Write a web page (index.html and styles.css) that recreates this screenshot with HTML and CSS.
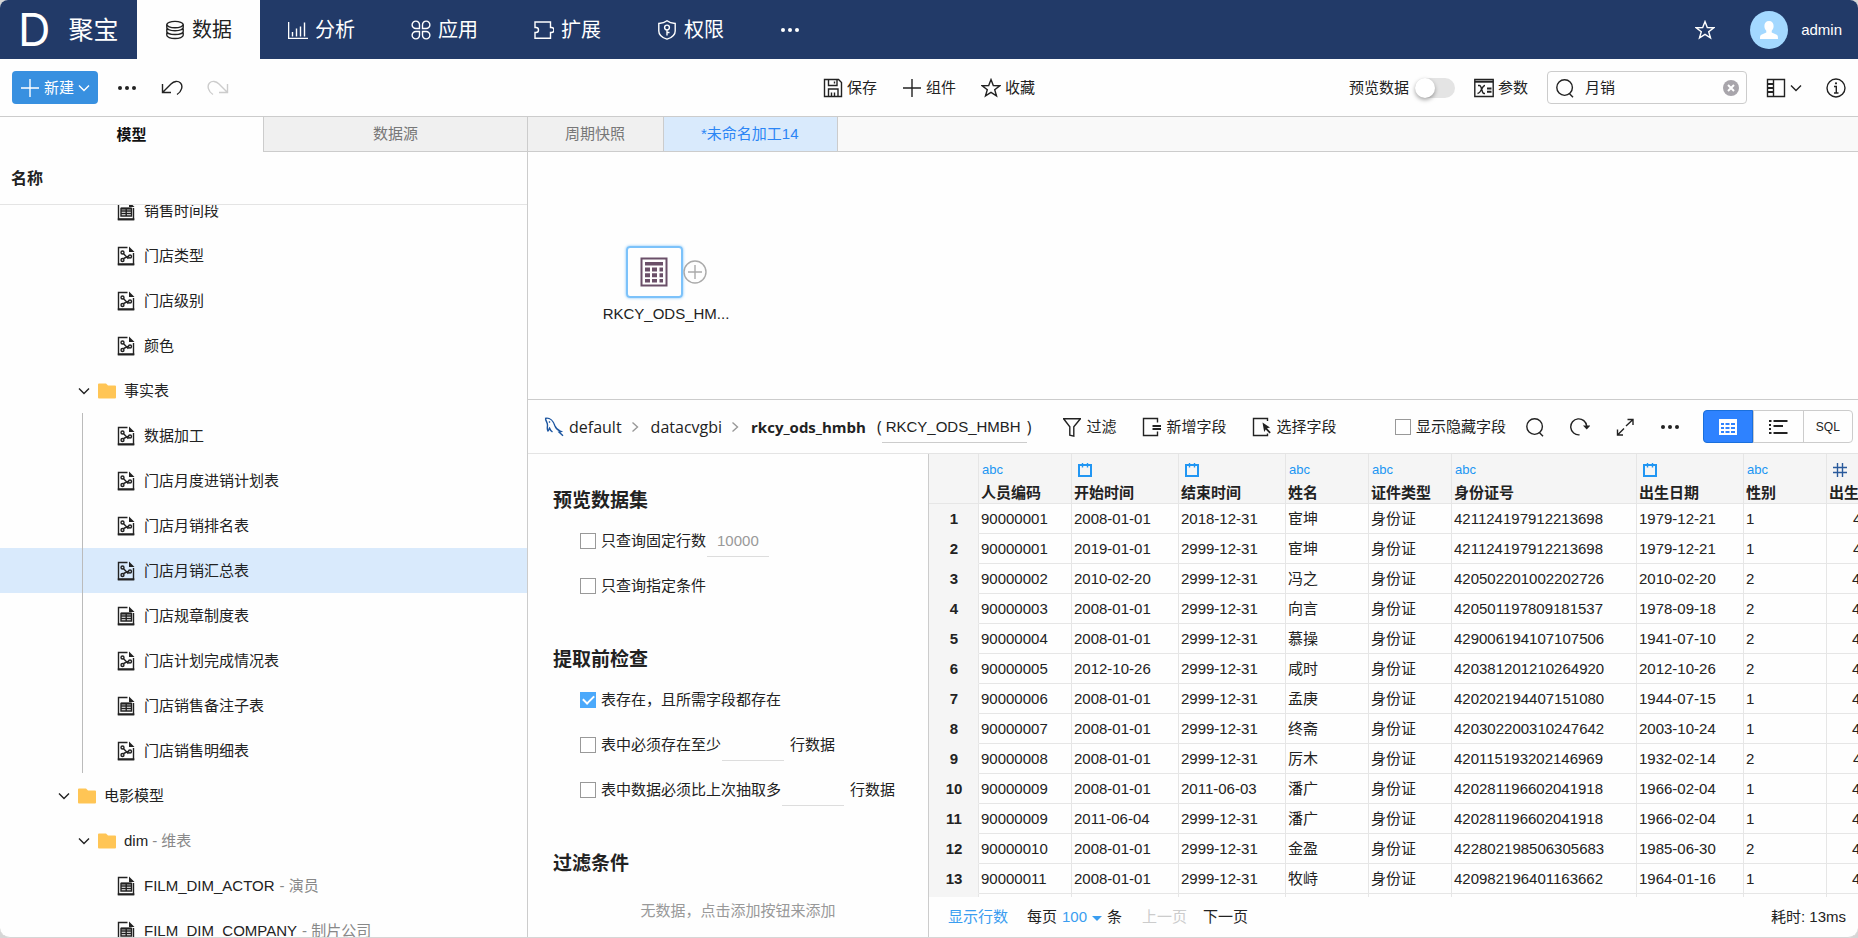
FILE: index.html
```html
<!DOCTYPE html>
<html lang="zh-CN">
<head>
    <meta charset="UTF-8">
    <meta name="viewport" content="width=device-width, initial-scale=1.0">
    <title>聚宝 - 数据</title>
    <link rel="stylesheet" href="styles.css">
</head>
<body>
    <!-- 图标 -->
    <svg class="sprite" aria-hidden="true">
        <symbol id="i-db" viewBox="0 0 20 20"><ellipse cx="10" cy="4.6" rx="8.2" ry="3.2"/><path d="M1.8 4.6v3c0 1.7 3.6 3.1 8.2 3.1s8.2-1.4 8.2-3.1v-3M1.8 8.6v2.8c0 1.7 3.6 3.1 8.2 3.1s8.2-1.4 8.2-3.1V8.600M1.800 12.400v2.900c0 1.700 3.600 3.200 8.200 3.200s8.200-1.500 8.200-3.200v-2.900"/></symbol>
        <symbol id="i-chart" viewBox="0 0 20 20"><path d="M.6 2v16.4H20M4.5 12v4.5M8.5 8.5v8M12.500 6.500v10M16.500 2.500v14"/></symbol>
        <symbol id="i-apps" viewBox="0 0 20 20"><path d="M8.500 8.500H5A3.700 3.700 0 1 1 8.500 5zM11.500 8.500V5A3.700 3.700 0 1 1 15 8.500zM8.500 11.500V15A3.700 3.700 0 1 1 5 11.500zM11.500 11.500H15a3.700 3.700 0 1 1-3.500 3.500z"/></symbol>
        <symbol id="i-ext" viewBox="0 0 20 20"><path d="M1 2h15.500v5.500h1a2.500 2.500 0 0 1 0 5h-1v5.800H1v-5.800h1a2.500 2.500 0 0 0 0-5H1z"/></symbol>
        <symbol id="i-shield" viewBox="0 0 20 20"><path d="M10 .8C7.500 2.800 5 3.300 1.800 3.500V11c0 4 3.700 6.800 8.200 8.200 4.500-1.400 8.200-4.200 8.200-8.200V3.500C15 3.300 12.500 2.800 10 .8z"/><circle cx="10" cy="7.500" r="2.400"/><path d="M10 10v5.500M10 12.500h2.500"/></symbol>
        <symbol id="i-dots" viewBox="0 0 20 20"><g class="solid"><circle cx="3" cy="10" r="2"/><circle cx="10" cy="10" r="2"/><circle cx="17" cy="10" r="2"/></g></symbol>
        <symbol id="i-star" viewBox="0 0 20 20"><path d="M10 1.600l2.300 5.900 6.500.2-5.100 4 1.800 6.200L10 14.300l-5.500 3.600 1.800-6.200-5.100-4 6.500-.2z"/></symbol>
        <symbol id="i-user" viewBox="0 0 20 20"><path class="solid" d="M10 1c3 0 4.600 2 4.600 5 0 2-.7 3.600-1.900 4.700v1.800l5 2.300c1 .5 1.300 1.200 1.300 4.200H1c0-3 .3-3.700 1.300-4.200l5-2.300v-1.800C6.100 9.600 5.400 8 5.400 6c0-3 1.600-5 4.600-5z"/></symbol>
        <symbol id="i-plus" viewBox="0 0 20 20"><path d="M10 1v18M1 10h18"/></symbol>
        <symbol id="i-down" viewBox="0 0 12 12"><path d="M1 3.500l5 5 5-5"/></symbol>
        <symbol id="i-right" viewBox="0 0 12 12"><path d="M3.500 1.500L8.500 6l-5 4.500"/></symbol>
        <symbol id="i-undo" viewBox="0 0 22 20"><path d="M1.500 6v8.500H10M2 14l8-8c3-3 7-3.500 9.500-1 2.600 2.700 1.500 8.500-3.500 11.500"/></symbol>
        <symbol id="i-redo" viewBox="0 0 22 20"><path d="M20.500 6v8.500H12M20 14l-8-8C9 3 5 2.500 2.500 5-.1 7.700 1 13.500 6 16.500"/></symbol>
        <symbol id="i-save" viewBox="0 0 20 20"><path d="M1.500 1.500h14l3 3v14h-17zM5.500 1.500v6h8.500v-6M5.500 18.500v-7.500h9.500v7.500M8.500 18.500v-4M11.500 18.500v-4M11.500 3.500v2"/></symbol>
        <symbol id="i-param" viewBox="0 0 20 20"><path d="M.8 1.500h18.400v17H.8z"/><path class="thick" d="M.8 3.700h18.400"/><path d="M4 7.500h1.500c2.500 0 2 8 4.500 8h1M11 7.500c-3 0-4 8-7.500 8"/><path class="thick" d="M13 10.500h4.500M13 13.800h4.500"/></symbol>
        <symbol id="i-search" viewBox="0 0 20 20"><circle cx="9.600" cy="9.600" r="7.800"/><path d="M14.300 15.500l3.700 3.700"/></symbol>
        <symbol id="i-layout" viewBox="0 0 20 20"><path d="M1.500 1.500h17v17h-17zM7.500 1.500v17"/><path class="thick" d="M2 6h5M2 10h5M2 14h5"/></symbol>
        <symbol id="i-info" viewBox="0 0 20 20"><circle cx="10" cy="10" r="9"/><path d="M8 8.500h2.300V15M8 15h4.500"/><circle class="solid" cx="10" cy="5.300" r="1.100"/></symbol>
        <symbol id="i-flow" viewBox="0 0 18 20"><path d="M10.500 1.500h-9v17h15V7"/><path class="thick" d="M.8 18.300h16.500"/><path class="solid" d="M12 .5l5.500 5.500H12z"/><circle cx="5.500" cy="6.500" r="1.500"/><circle cx="5.500" cy="14" r="1.500"/><circle cx="13" cy="10.500" r="1.500"/><path d="M6.600 7.800l4.800 5M6.600 12.500l5-2.300"/></symbol>
        <symbol id="i-sheet" viewBox="0 0 18 20"><path d="M10.500 1.500h-9v17h15V7"/><path class="thick" d="M.8 18.300h16.500"/><path class="solid" d="M12 .5l5.500 5.500H12z"/><path d="M4 7.500h10.500v7.500H4zM4 10h10.500M4 12.500h10.500M9.200 7.500v7.500"/><path class="thick" d="M4 7.500h10.500"/></symbol>
        <symbol id="i-folder" viewBox="0 0 18 16"><path d="M0 1.500Q0 .5 1 .5h7l2 2h7q1 0 1 1v11q0 1-1 1H1q-1 0-1-1z"/></symbol>
        <symbol id="i-calc" viewBox="0 0 28 30"><path class="thick" d="M1.500 1.500h25v27h-25z"/><g class="solid"><path d="M5 5h18v3.500H5zM5 10.500h5v4H5zM12 10.500h5v4h-5zM19.500 10.500H23v4h-3.500zM5 16.200h5v4H5zM12 16.200h5v4h-5zM19.500 16.200H23v4h-3.500zM5 22h5v3.500H5zM12 22h5v3.500h-5zM19.500 22H23v3.500h-3.500z"/></g></symbol>
        <symbol id="i-mysql" viewBox="0 0 20 20"><path d="M1 1.500c5-1.500 8.500 3 10 7.500 1.300 3.600 3.500 4.300 6 5.500l-2 .5 4 3.800M1.500 2c.5 2.500 2 3.500 2 6s-.8 4 .5 6c1 0 1-2.500 1.500-3 .5 1.500 1.500 3 3 4M5 4.500l1 1"/></symbol>
        <symbol id="i-filter" viewBox="0 0 20 20"><path d="M1 1.800h18M1.800 2l6 7.800v8.400l4 .9V9.800l6.400-7.800"/></symbol>
        <symbol id="i-addcol" viewBox="0 0 20 20"><path d="M15.500 5.500v-4h-14v17h14v-4"/><path class="thick" d="M10.500 9h8.500M10.500 12h8.500"/></symbol>
        <symbol id="i-pickcol" viewBox="0 0 20 20"><path d="M15.500 4V1.500h-14v17h14v-2"/><path class="solid" d="M10.500 5.500l7.500 5-3 .8 3.800 4-1.300 1.200-3.800-4-1.500 2.500z"/></symbol>
        <symbol id="i-refresh" viewBox="0 0 20 20"><path d="M9.500 17.800A8 8 0 1 1 16.700 9"/><path class="solid" d="M13 8.500h7.500L16.700 12.500z"/></symbol>
        <symbol id="i-expand" viewBox="0 0 20 20"><path d="M12.500 2.500H18V8M18 2.500L11 9M2.500 12.500V18H8M2.500 18l6.500-6.500"/></symbol>
        <symbol id="i-table" viewBox="0 0 20 20"><path class="solid" fill-rule="evenodd" d="M1 2h18v16H1zM3 6v2h3V6zM7.500 6v2h4V6zM13 6v2h4V6zM3 10v2h3v-2zM7.500 10v2h4v-2zM13 10v2h4v-2zM3 14v2h3v-2zM7.500 14v2h4v-2zM13 14v2h4v-2z"/></symbol>
        <symbol id="i-list" viewBox="0 0 20 20"><path class="thick" d="M5.500 4h14M5.500 9H15M5.500 16h14M1 4h2.500M1 8h2M1 12h2M1 16h2.500"/></symbol>
        <symbol id="i-date" viewBox="0 0 14 14"><path class="thick" d="M1 2h12v11H1z"/><path d="M4.500 0v4.500M9.500 0v4.500"/></symbol>
        <symbol id="i-hash" viewBox="0 0 14 14"><path d="M4.500 0v14M9.500 0v14M0 4.500h14M0 9.500h14"/></symbol>
    </svg>

    <div class="app">
        <header class="topbar">
            <div class="brand">
                <span class="brand-mark">D</span>
                <span class="brand-name">聚宝</span>
            </div>
            <nav class="nav">
                <a href="#" class="active"><svg class="icon"><use href="#i-db"/></svg>数据</a>
                <a href="#"><svg class="icon"><use href="#i-chart"/></svg>分析</a>
                <a href="#"><svg class="icon"><use href="#i-apps"/></svg>应用</a>
                <a href="#"><svg class="icon"><use href="#i-ext"/></svg>扩展</a>
                <a href="#"><svg class="icon"><use href="#i-shield"/></svg>权限</a>
                <a href="#" aria-label="更多"><svg class="icon"><use href="#i-dots"/></svg></a>
            </nav>
            <div class="account">
                <button type="button" aria-label="收藏夹"><svg class="icon"><use href="#i-star"/></svg></button>
                <span class="avatar"><svg class="icon"><use href="#i-user"/></svg></span>
                <span class="user-name">admin</span>
            </div>
        </header>

        <div class="toolbar">
            <div class="tools">
                <button type="button" class="btn-new"><svg class="icon"><use href="#i-plus"/></svg>新建<svg class="icon-sm"><use href="#i-down"/></svg></button>
                <div class="tools-history">
                    <button type="button" aria-label="更多"><svg class="icon"><use href="#i-dots"/></svg></button>
                    <button type="button" aria-label="撤销"><svg class="icon-wide"><use href="#i-undo"/></svg></button>
                    <button type="button" aria-label="重做" disabled><svg class="icon-wide"><use href="#i-redo"/></svg></button>
                </div>
            </div>
            <div class="tools-center">
                <button type="button"><svg class="icon"><use href="#i-save"/></svg>保存</button>
                <button type="button"><svg class="icon"><use href="#i-plus"/></svg>组件</button>
                <button type="button"><svg class="icon"><use href="#i-star"/></svg>收藏</button>
            </div>
            <div class="tools tools-right">
                <label class="switch">预览数据<input type="checkbox" role="switch"></label>
                <button type="button"><svg class="icon"><use href="#i-param"/></svg>参数</button>
                <div class="search">
                    <svg class="icon"><use href="#i-search"/></svg>
                    <input type="text" value="月销" aria-label="搜索">
                    <button type="button" class="clear" aria-label="清除"><svg viewBox="0 0 16 16"><path d="M5 5l6 6M11 5l-6 6"/></svg></button>
                </div>
                <button type="button" class="btn-layout" aria-label="布局"><svg class="icon"><use href="#i-layout"/></svg><svg class="icon-sm"><use href="#i-down"/></svg></button>
                <button type="button" aria-label="信息"><svg class="icon"><use href="#i-info"/></svg></button>
            </div>
        </div>

        <div class="workspace">
            <aside class="sidebar">
                <div class="side-tabs">
                    <button type="button" class="active">模型</button>
                    <button type="button">数据源</button>
                </div>
                <div class="side-title">名称</div>
                <div class="tree">
                    <ul>
                        <li class="node leaf"><svg class="icon-file"><use href="#i-sheet"/></svg>销售时间段</li>
                        <li class="node leaf"><svg class="icon-file"><use href="#i-flow"/></svg>门店类型</li>
                        <li class="node leaf"><svg class="icon-file"><use href="#i-flow"/></svg>门店级别</li>
                        <li class="node leaf"><svg class="icon-file"><use href="#i-flow"/></svg>颜色</li>
                        <li class="node folder"><svg class="icon-sm"><use href="#i-down"/></svg><svg class="icon-folder"><use href="#i-folder"/></svg>事实表</li>
                    </ul>
                    <ul class="guide">
                        <li class="node leaf"><svg class="icon-file"><use href="#i-flow"/></svg>数据加工</li>
                        <li class="node leaf"><svg class="icon-file"><use href="#i-flow"/></svg>门店月度进销计划表</li>
                        <li class="node leaf"><svg class="icon-file"><use href="#i-flow"/></svg>门店月销排名表</li>
                        <li class="node leaf selected"><svg class="icon-file"><use href="#i-flow"/></svg>门店月销汇总表</li>
                        <li class="node leaf"><svg class="icon-file"><use href="#i-sheet"/></svg>门店规章制度表</li>
                        <li class="node leaf"><svg class="icon-file"><use href="#i-flow"/></svg>门店计划完成情况表</li>
                        <li class="node leaf"><svg class="icon-file"><use href="#i-sheet"/></svg>门店销售备注子表</li>
                        <li class="node leaf"><svg class="icon-file"><use href="#i-flow"/></svg>门店销售明细表</li>
                    </ul>
                    <ul>
                        <li class="node folder-root"><svg class="icon-sm"><use href="#i-down"/></svg><svg class="icon-folder"><use href="#i-folder"/></svg>电影模型</li>
                        <li class="node folder"><svg class="icon-sm"><use href="#i-down"/></svg><svg class="icon-folder"><use href="#i-folder"/></svg>dim<span class="desc">- 维表</span></li>
                        <li class="node leaf"><svg class="icon-file"><use href="#i-sheet"/></svg>FILM_DIM_ACTOR<span class="desc">- 演员</span></li>
                        <li class="node leaf"><svg class="icon-file"><use href="#i-sheet"/></svg>FILM_DIM_COMPANY<span class="desc">- 制片公司</span></li>
                    </ul>
                </div>
            </aside>

            <main class="main">
                <div class="doc-tabs">
                    <button type="button">周期快照</button>
                    <button type="button" class="active">*未命名加工14</button>
                </div>

                <div class="canvas">
                    <div class="flow-node">
                        <div class="flow-row">
                            <div class="flow-box"><svg><use href="#i-calc"/></svg></div>
                            <button type="button" class="flow-add" aria-label="添加节点"><svg viewBox="0 0 24 24"><circle cx="12" cy="12" r="11"/><path d="M12 5v14M5 12h14"/></svg></button>
                        </div>
                        <span class="flow-label">RKCY_ODS_HM...</span>
                    </div>
                </div>

                <div class="pathbar">
                    <div class="crumbs">
                        <svg class="icon mysql"><use href="#i-mysql"/></svg>
                        <a href="#">default</a>
                        <svg class="icon-sm"><use href="#i-right"/></svg>
                        <a href="#">datacvgbi</a>
                        <svg class="icon-sm"><use href="#i-right"/></svg>
                        <b>rkcy_ods_hmbh</b>
                        <span class="alias">(<input type="text" value="RKCY_ODS_HMBH" aria-label="别名">)</span>
                    </div>
                    <div class="path-actions">
                        <button type="button"><svg class="icon"><use href="#i-filter"/></svg>过滤</button>
                        <button type="button"><svg class="icon"><use href="#i-addcol"/></svg>新增字段</button>
                        <button type="button"><svg class="icon"><use href="#i-pickcol"/></svg>选择字段</button>
                    </div>
                    <div class="path-right">
                        <label class="check"><input type="checkbox">显示隐藏字段</label>
                        <button type="button" aria-label="搜索"><svg class="icon"><use href="#i-search"/></svg></button>
                        <button type="button" aria-label="刷新"><svg class="icon"><use href="#i-refresh"/></svg></button>
                        <button type="button" aria-label="全屏"><svg class="icon"><use href="#i-expand"/></svg></button>
                        <button type="button" aria-label="更多"><svg class="icon"><use href="#i-dots"/></svg></button>
                    </div>
                    <div class="view-group">
                        <button type="button" class="active" aria-label="表格"><svg class="icon"><use href="#i-table"/></svg></button>
                        <button type="button" aria-label="列表"><svg class="icon"><use href="#i-list"/></svg></button>
                        <button type="button">SQL</button>
                    </div>
                </div>

                <div class="detail">
                    <section class="settings">
                        <h3>预览数据集</h3>
                        <div class="option">
                            <label class="check"><input type="checkbox">只查询固定行数</label>
                            <input type="text" class="line-input" placeholder="10000" aria-label="行数">
                        </div>
                        <div class="option">
                            <label class="check"><input type="checkbox">只查询指定条件</label>
                        </div>
                        <h3>提取前检查</h3>
                        <div class="option">
                            <label class="check"><input type="checkbox" checked>表存在，且所需字段都存在</label>
                        </div>
                        <div class="option">
                            <label class="check"><input type="checkbox">表中必须存在至少</label>
                            <input type="text" class="line-input" aria-label="最少行数">
                            <span class="unit">行数据</span>
                        </div>
                        <div class="option">
                            <label class="check"><input type="checkbox">表中数据必须比上次抽取多</label>
                            <input type="text" class="line-input" aria-label="增加行数">
                            <span class="unit">行数据</span>
                        </div>
                        <h3>过滤条件</h3>
                        <p class="empty">无数据，点击添加按钮来添加</p>
                    </section>

                    <section class="preview">
                        <div class="grid">
                            <table>
                                <colgroup>
                                    <col class="c-no"><col class="c-code"><col class="c-date"><col class="c-date"><col class="c-short"><col class="c-short"><col class="c-id"><col class="c-date"><col class="c-short"><col class="c-area">
                                </colgroup>
                                <thead>
                                    <tr>
                                        <th></th>
                                        <th><span class="type">abc</span>人员编码</th>
                                        <th><span class="type"><svg><use href="#i-date"/></svg></span>开始时间</th>
                                        <th><span class="type"><svg><use href="#i-date"/></svg></span>结束时间</th>
                                        <th><span class="type">abc</span>姓名</th>
                                        <th><span class="type">abc</span>证件类型</th>
                                        <th><span class="type">abc</span>身份证号</th>
                                        <th><span class="type"><svg><use href="#i-date"/></svg></span>出生日期</th>
                                        <th><span class="type">abc</span>性别</th>
                                        <th><span class="type num"><svg><use href="#i-hash"/></svg></span>出生地</th>
                                    </tr>
                                </thead>
                                <tbody>
                                    <tr><th>1</th><td>90000001</td><td>2008-01-01</td><td>2018-12-31</td><td>宦坤</td><td>身份证</td><td>421124197912213698</td><td>1979-12-21</td><td>1</td><td>421124</td></tr>
                                    <tr><th>2</th><td>90000001</td><td>2019-01-01</td><td>2999-12-31</td><td>宦坤</td><td>身份证</td><td>421124197912213698</td><td>1979-12-21</td><td>1</td><td>421124</td></tr>
                                    <tr><th>3</th><td>90000002</td><td>2010-02-20</td><td>2999-12-31</td><td>冯之</td><td>身份证</td><td>420502201002202726</td><td>2010-02-20</td><td>2</td><td>420502</td></tr>
                                    <tr><th>4</th><td>90000003</td><td>2008-01-01</td><td>2999-12-31</td><td>向言</td><td>身份证</td><td>420501197809181537</td><td>1978-09-18</td><td>2</td><td>420501</td></tr>
                                    <tr><th>5</th><td>90000004</td><td>2008-01-01</td><td>2999-12-31</td><td>慕操</td><td>身份证</td><td>429006194107107506</td><td>1941-07-10</td><td>2</td><td>429006</td></tr>
                                    <tr><th>6</th><td>90000005</td><td>2012-10-26</td><td>2999-12-31</td><td>咸时</td><td>身份证</td><td>420381201210264920</td><td>2012-10-26</td><td>2</td><td>420381</td></tr>
                                    <tr><th>7</th><td>90000006</td><td>2008-01-01</td><td>2999-12-31</td><td>孟庚</td><td>身份证</td><td>420202194407151080</td><td>1944-07-15</td><td>1</td><td>420202</td></tr>
                                    <tr><th>8</th><td>90000007</td><td>2008-01-01</td><td>2999-12-31</td><td>终斋</td><td>身份证</td><td>420302200310247642</td><td>2003-10-24</td><td>1</td><td>420302</td></tr>
                                    <tr><th>9</th><td>90000008</td><td>2008-01-01</td><td>2999-12-31</td><td>厉木</td><td>身份证</td><td>420115193202146969</td><td>1932-02-14</td><td>2</td><td>420115</td></tr>
                                    <tr><th>10</th><td>90000009</td><td>2008-01-01</td><td>2011-06-03</td><td>潘广</td><td>身份证</td><td>420281196602041918</td><td>1966-02-04</td><td>1</td><td>420281</td></tr>
                                    <tr><th>11</th><td>90000009</td><td>2011-06-04</td><td>2999-12-31</td><td>潘广</td><td>身份证</td><td>420281196602041918</td><td>1966-02-04</td><td>1</td><td>420281</td></tr>
                                    <tr><th>12</th><td>90000010</td><td>2008-01-01</td><td>2999-12-31</td><td>金盈</td><td>身份证</td><td>422802198506305683</td><td>1985-06-30</td><td>2</td><td>422802</td></tr>
                                    <tr><th>13</th><td>90000011</td><td>2008-01-01</td><td>2999-12-31</td><td>牧峙</td><td>身份证</td><td>420982196401163662</td><td>1964-01-16</td><td>1</td><td>420982</td></tr>
                                    <tr><th></th><td></td><td></td><td></td><td></td><td></td><td></td><td></td><td></td><td></td></tr>
                                </tbody>
                            </table>
                        </div>
                        <footer class="pager">
                            <a href="#">显示行数</a>
                            <label class="page-size">每页
                                <span class="select"><select><option>100</option></select></span>
                                条
                            </label>
                            <button type="button" disabled>上一页</button>
                            <button type="button">下一页</button>
                            <span class="elapsed">耗时: 13ms</span>
                        </footer>
                    </section>
                </div>
            </main>
        </div>
    </div>
</body>
</html>
```
FILE: styles.css
```css
* { box-sizing: border-box; }
body { margin: 0; background: #d6d6d6; font: 15px/20px "Liberation Sans", "Noto Sans CJK SC", sans-serif; color: #222; }
button, input, select { font: inherit; color: inherit; }
button { display: flex; align-items: center; gap: 4px; padding: 0; border: none; background: none; white-space: nowrap; cursor: pointer; }
button:disabled { color: #ccc; cursor: default; }
a { color: inherit; text-decoration: none; }
ul { margin: 0; padding: 0; list-style: none; }
svg { flex: none; fill: none; stroke: currentColor; stroke-width: 1.4; }
.sprite { position: absolute; width: 0; height: 0; }
.solid { fill: currentColor; stroke: none; }
.thick { stroke-width: 2; }
.icon { width: 20px; height: 20px; }
.icon-wide { width: 22px; height: 20px; }
.icon-sm { width: 12px; height: 12px; }
.icon-file { width: 18px; height: 20px; }
.icon-folder { width: 18px; height: 16px; fill: #ffc555; stroke: none; }

.app { display: flex; flex-direction: column; height: 100vh; background: #fefefe; border-bottom: 1px solid #d6d6d6; border-radius: 8px 8px 10px 10px; overflow: hidden; }

/* 顶部导航 */
.topbar { display: flex; flex: none; height: 59px; background: #223a68; color: #fff; }
.brand { display: flex; align-items: center; gap: 18px; width: 137px; padding-left: 18px; }
.brand-mark { font: 45px/59px Inter, sans-serif; }
.brand-name { font-size: 25px; }
.nav { display: flex; }
.nav a { display: flex; align-items: center; gap: 7px; padding: 0 28px; font-size: 20px; }
.nav a.active { background: #fefefe; color: #222; }
.account { display: flex; align-items: center; margin-left: auto; padding-right: 16px; }
.avatar { display: flex; align-items: center; justify-content: center; width: 38px; height: 38px; margin: 0 13px 0 35px; border-radius: 50%; background: #a3d8ff; }

/* 工具栏 */
.toolbar { display: grid; grid-template-columns: 1fr auto 1fr; align-items: center; flex: none; height: 58px; padding: 0 12px; border-bottom: 1px solid #ccc; }
.tools { display: flex; align-items: center; gap: 19px; }
.tools-right { justify-content: flex-end; }
.tools-history { display: flex; gap: 24px; }
.tools-center { display: flex; gap: 25px; }
.btn-new { height: 33px; padding: 0 8px; border-radius: 4px; background: #3890e0; color: #fff; }
.btn-layout { margin-right: 5px; }
.switch { display: flex; align-items: center; gap: 6px; }
.switch input { appearance: none; width: 40px; height: 20px; margin: 0; border-radius: 10px; background: #e4e4e4; }
.switch input::before { content: ""; display: block; width: 20px; height: 20px; border-radius: 50%; background: #fff; box-shadow: 0 2px 4px rgba(0, 0, 0, .35); }
.search { display: flex; align-items: center; width: 200px; height: 33px; padding: 0 7px; border: 1px solid #ccc; border-radius: 4px; }
.search input { flex: 1; min-width: 0; margin-left: 10px; padding: 0; border: none; outline: none; background: none; }
.clear svg { width: 16px; height: 16px; border-radius: 50%; background: #a8a5ab; color: #fff; stroke-width: 2; }

/* 左侧模型树 */
.workspace { display: flex; flex: 1; min-height: 0; }
.sidebar { display: flex; flex-direction: column; flex: none; width: 528px; border-right: 1px solid #ccc; }
.side-tabs { display: flex; flex: none; height: 35px; }
.side-tabs button { flex: 1; justify-content: center; border: 0 solid #ccc; border-width: 0 0 1px 1px; background: #f0f0f0; color: #777; }
.side-tabs button.active { border: none; background: none; color: #111; font-weight: bold; }
.side-title { flex: none; height: 53px; padding-left: 11px; border-bottom: 1px solid #e4e4e4; font-size: 16px; font-weight: bold; line-height: 54px; }
.tree { flex: 1; min-height: 0; overflow: hidden; }
.tree ul:first-child { margin-top: -17px; }
.node { display: flex; align-items: center; height: 45px; white-space: nowrap; }
.leaf { gap: 9px; padding-left: 117px; }
.folder { gap: 8px; padding-left: 78px; }
.folder-root { gap: 8px; padding-left: 58px; }
.node .desc { margin-left: -4px; color: #888; }
.node.selected { background: #d9eafc; }
.guide { position: relative; }
.guide::before { content: ""; position: absolute; top: 0; bottom: 0; left: 82px; border-left: 1px solid #bbb; }

/* 主区域 */
.main { display: flex; flex-direction: column; flex: 1; min-width: 0; }
.doc-tabs { display: flex; flex: none; height: 35px; border-bottom: 1px solid #ccc; background: #f9f9f9; }
.doc-tabs button { padding: 0 38px 0 37px; border-right: 1px solid #ccc; background: #f0f0f0; color: #777; }
.doc-tabs button.active { background: #d9eafc; color: #2b85f5; }
.canvas { position: relative; flex: none; height: 248px; border-bottom: 1px solid #ccc; }
.flow-node { position: absolute; left: 74px; top: 94px; display: flex; flex-direction: column; align-items: center; gap: 6px; width: 128px; white-space: nowrap; }
.flow-row { display: flex; align-items: center; }
.flow-box { display: flex; align-items: center; justify-content: center; width: 57px; height: 52px; border: 2px solid #7cc2fa; border-radius: 4px; box-shadow: 0 0 3px #7cc2fa; color: #6a4f68; }
.flow-box svg { width: 28px; height: 30px; }
.flow-add svg { width: 24px; height: 24px; color: #aaa; }

.pathbar { display: flex; align-items: center; flex: none; height: 54px; padding: 0 5px 0 16px; border-bottom: 1px solid #e4e4e4; }
.crumbs { display: flex; align-items: center; font: 16px/20px "Open Sans", "Noto Sans CJK SC", sans-serif; }
.crumbs a { margin: 0 7px 0 5px; }
.crumbs .icon-sm { margin-right: 5px; color: #999; }
.crumbs .mysql { color: #1d56a0; }
.crumbs b { margin-left: 5px; font-size: 15px; }
.alias { display: flex; align-items: center; margin-left: 11px; }
.alias input { width: 145px; height: 33px; padding: 0 4px; border: none; border-bottom: 1px solid #ccc; outline: none; background: none; font: 15px "Liberation Sans", sans-serif; }
.path-actions { display: flex; gap: 26px; margin-left: 31px; }
.path-right { display: flex; align-items: center; gap: 25px; margin: 0 23px 0 auto; }
.path-right .check { margin-right: -6px; }
.view-group { display: flex; width: 150px; height: 33px; border: 1px solid #ccc; border-radius: 4px; }
.view-group button { flex: 1; justify-content: center; border-left: 1px solid #ccc; font-size: 12px; }
.view-group .active { margin: -1px 0 -1px -1px; border: 1px solid #1a6fdc; border-radius: 4px 0 0 4px; background: #2e82ff; color: #fff; }

.check { display: flex; align-items: center; gap: 5px; white-space: nowrap; }
.check input { appearance: none; display: flex; align-items: center; justify-content: center; width: 16px; height: 16px; margin: 0; border: 1px solid #999; background: #fff; }
.check input:checked { border-color: #4ba9fb; background: #4ba9fb; }
.check input:checked::before { content: ""; width: 5px; height: 9px; margin-bottom: 3px; border: solid #fff; border-width: 0 2px 2px 0; transform: rotate(45deg); }

/* 抽取设置 */
.detail { display: flex; flex: 1; min-height: 0; }
.settings { flex: none; width: 401px; padding: 0 5px 0 25px; border-right: 1px solid #ccc; overflow: hidden; }
.settings h3 { margin: 35px 0 0; font-size: 19px; line-height: 34px; }
.settings h3:first-child { margin-top: 30px; }
.option { display: flex; align-items: center; height: 45px; padding-left: 27px; white-space: nowrap; }
.line-input { flex: none; width: 62px; height: 33px; margin-left: 1px; padding: 0 10px; border: none; border-bottom: 1px solid #ddd; outline: none; background: none; }
.line-input::placeholder { color: #999; }
.unit { margin-left: 6px; }
.empty { margin: 20px 0 0; text-align: center; color: #999; }

/* 数据预览 */
.preview { display: flex; flex-direction: column; flex: 1; min-width: 0; }
.grid { flex: 1; min-height: 0; overflow: hidden; }
table { width: 976px; border-collapse: separate; border-spacing: 0; table-layout: fixed; }
.c-no { width: 50px; }
.c-code { width: 93px; }
.c-date { width: 107px; }
.c-short { width: 83px; }
.c-id { width: 185px; }
th, td { height: 30px; padding: 0 2px; border: 0 solid #e6e6e6; border-width: 0 1px 1px 0; text-align: left; white-space: nowrap; }
thead th { height: 50px; padding-top: 6px; background: #f5f5f5; }
tbody th { padding: 0 0 0 1px; border-bottom-color: #f5f5f5; background: #f5f5f5; text-align: center; }
td:last-child { text-align: right; }
.type { display: flex; align-items: center; height: 19px; margin-bottom: 3px; padding-left: 1px; color: #2196f3; font-size: 13px; font-weight: normal; }
.type svg { width: 14px; height: 14px; margin-left: 3px; }
.type.num { color: #2a5a9c; }
.pager { display: flex; align-items: center; flex: none; height: 40px; padding: 0 12px 0 19px; }
.pager a { margin-right: 19px; color: #3a9df0; }
.page-size { display: flex; align-items: center; gap: 5px; margin-right: 20px; }
.select { position: relative; display: flex; color: #3a9df0; }
.select::after { content: ""; position: absolute; top: 9px; right: 0; border: 5px solid transparent; border-top-color: currentColor; border-bottom: none; pointer-events: none; }
.select select { appearance: none; width: 40px; padding: 0; border: none; outline: none; background: none; }
.pager button { margin-right: 16px; }
.elapsed { margin-left: auto; }
```
